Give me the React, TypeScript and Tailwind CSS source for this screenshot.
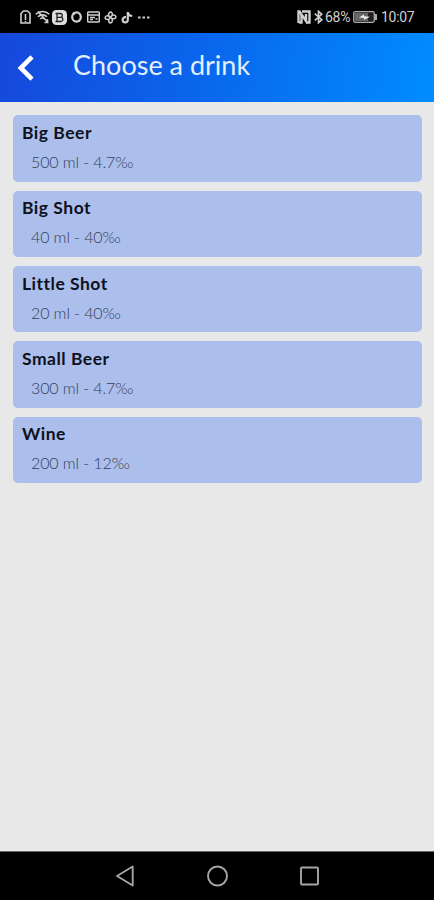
type Drink = {
  name: string;
  details: string;
};

const drinks: Drink[] = [
  { name: "Big Beer", details: "500 ml - 4.7‰" },
  { name: "Big Shot", details: "40 ml - 40‰" },
  { name: "Little Shot", details: "20 ml - 40‰" },
  { name: "Small Beer", details: "300 ml - 4.7‰" },
  { name: "Wine", details: "200 ml - 12‰" },
];

export default function App() {
  return (
    <div className="flex h-[900px] w-[434px] flex-col overflow-hidden bg-[#e8e8e8] font-['Lato',sans-serif]">
      <StatusBar />
      <header className="flex h-[69.5px] shrink-0 items-center bg-linear-[100deg,#1648dc_0%,#0a65ec_45%,#008cff_100%]">
        <button aria-label="Back" className="ml-[17px] mt-[2px] h-[28px] w-[18px]">
          <svg viewBox="0 0 18 28" className="h-full w-full" fill="none" stroke="#fff" strokeWidth="4.6">
            <path d="M15 2.8 3.8 14 15 25.2" />
          </svg>
        </button>
        <h1 className="ml-[38px] mt-[-4px] whitespace-nowrap text-[27px] leading-8 text-[#e4efff]">Choose a drink</h1>
      </header>

      <main className="flex flex-1 flex-col gap-[8.9px] pl-[13px] pr-3 pt-[13.2px]">
        {drinks.map((drink) => (
          <DrinkCard key={drink.name} drink={drink} />
        ))}
      </main>

      <NavBar />
    </div>
  );
}

function DrinkCard({ drink }: { drink: Drink }) {
  return (
    <button className="flex h-[66.5px] shrink-0 flex-col items-start whitespace-nowrap rounded-[5px] bg-[#acbeec] pl-[9px] pt-[6.7px] text-left">
      <span className="text-[17.5px] font-bold leading-[22px] tracking-[0.5px] text-[#0d111b]">{drink.name}</span>
      <span className="ml-[9px] mt-[8px] text-[16px] font-light leading-5 tracking-[-0.1px] text-[#343e59]">{drink.details}</span>
    </button>
  );
}

function StatusBar() {
  return (
    <div className="flex h-[32.5px] shrink-0 items-center bg-black pl-5 pr-[19px] pt-[2px] text-[#cfcfcf]">
      <svg className="h-[14px] w-[11px]" viewBox="0 0 11 14" fill="none" stroke="currentColor" strokeWidth="1.6">
        <path d="M1 3.5 3.5 1h4L10 3.5V13H1z" />
        <path d="M5.5 4v6M5.5 11v1" />
      </svg>
      <svg className="ml-1 h-[14px] w-[15px]" viewBox="0 0 15 14" fill="none" stroke="currentColor" strokeWidth="1.6">
        <path d="M.7 4.2c3.8-3.7 9.8-3.7 13.6 0M3 6.7c2.5-2.5 6.5-2.5 9 0M5.2 9c1.4-1.4 3.2-1.4 4.6 0" />
        <path d="M3 1.5 12.5 12M9.5 12.5h4M12.5 9v4" />
      </svg>
      <svg className="ml-[2px] h-[15px] w-[15px]" viewBox="0 0 15 15">
        <rect width="15" height="15" rx="4.5" fill="#dedede" />
        <path d="M5 3.5h3.3a1.9 1.9 0 0 1 0 3.9H5zM5 7.4h3.8a2 2 0 0 1 0 4.100H5zM3.5 3.5H5M3.5 11.5H5" fill="none" stroke="#222" strokeWidth="1.3" />
      </svg>
      <svg className="ml-1 h-3 w-[11px]" viewBox="0 0 11 12" fill="none" stroke="currentColor">
        <ellipse cx="5.5" cy="6" rx="4.3" ry="4.7" strokeWidth="2.3" />
        <path d="M2 1.5 4 3.5M7 9l2 1.5" strokeWidth="1.5" />
      </svg>
      <svg className="ml-[5px] h-3 w-[13px]" viewBox="0 0 13 12" fill="none" stroke="currentColor" strokeWidth="1.5">
        <rect x=".7" y="1" width="11.6" height="10" rx="1" />
        <path d="M1 4h11M3 6.5h5M3 8.5h3M8.5 8h2" />
      </svg>
      <svg className="ml-1 h-[13px] w-[13px]" viewBox="0 0 13 13" fill="none" stroke="currentColor" strokeWidth="1.5">
        <path d="M6.5 6.5C3.5 5.5 4 1.3 7 1c2.2 1.3 1.6 4-.5 5.5C7.7 3.5 11.5 3.3 12 6c-.8 2.5-3.8 2.3-5.5.5C9.2 7.8 9 11.6 6.3 12c-2.4-.8-2-4 .2-5.5C5.2 9.3 1.5 9 1 6.8 1.5 4.2 5 4.2 6.5 6.5Z" />
      </svg>
      <svg className="ml-1 h-[13px] w-[12px]" viewBox="0 0 12 13" fill="none" stroke="currentColor" strokeWidth="2.2">
        <path d="M6.8 1v7.8a2.6 2.6 0 1 1-2.6-2.6h.8M6.8 1.5C7.2 3.7 8.8 4.9 11.2 5" />
      </svg>
      <svg className="ml-[5px] h-[3px] w-[12px]" viewBox="0 0 12 3" fill="currentColor">
        <path d="M0 .5h2.5v2H0zM4.5.5H7v2H4.5zM9 .5h2.5v2H9z" />
      </svg>

      <div className="ml-auto flex items-center">
        <svg className="h-[14px] w-[14px]" viewBox="0 0 14 14" fill="none" stroke="currentColor" strokeWidth="2.4">
          <path d="M1.5 13V1.5h1L9 11V4" />
          <path d="M5 1.5h7.500V12.5H9M4.500 5v7.500H2" />
        </svg>
        <svg className="ml-[3px] h-[14px] w-[9px]" viewBox="0 0 9 14" fill="none" stroke="currentColor" strokeWidth="1.6">
          <path d="m.8 3.7 7 6-3.300 3V1.300l3.300 3-7 6" />
        </svg>
        <span className="ml-[2px] w-[26px] whitespace-nowrap font-['Roboto',sans-serif] text-[14px] leading-4 tracking-[-0.3px]">68%</span>
        <svg className="ml-[2px] h-3 w-[25px]" viewBox="0 0 25 12">
          <rect x=".7" y=".7" width="20.6" height="10.6" rx="1.5" fill="#202020" stroke="#a9a9a9" strokeWidth="1.3" />
          <path d="M2 2h13v8H2z" fill="#666" />
          <path d="m6 6.4 5-3v1.8l6 .6-6 3V7z" fill="#eee" />
          <path d="M23 3v6" stroke="#a9a9a9" strokeWidth="2" />
        </svg>
        <span className="ml-[3px] w-[34px] whitespace-nowrap font-['Roboto',sans-serif] text-[14px] leading-4 tracking-[-0.3px]">10:07</span>
      </div>
    </div>
  );
}

function NavBar() {
  return (
    <nav className="flex h-[49px] shrink-0 items-center border-t border-[#666] bg-black pl-[115px] text-[#a5a5a5]">
      <svg className="h-[22px] w-[20px]" viewBox="0 0 20 22" fill="none" stroke="currentColor" strokeWidth="1.9" strokeLinejoin="round">
        <path d="M17.7 1.5v19L2 11z" />
      </svg>
      <svg className="ml-[71px] h-[22px] w-[22px]" viewBox="0 0 22 22" fill="none" stroke="currentColor" strokeWidth="1.9">
        <circle cx="11.5" cy="11" r="9.5" />
      </svg>
      <svg className="ml-[71px] h-[20px] w-[20px]" viewBox="0 0 20 20" fill="none" stroke="currentColor" strokeWidth="1.9">
        <rect x="2" y="1.5" width="17" height="17" rx="1" />
      </svg>
    </nav>
  );
}
